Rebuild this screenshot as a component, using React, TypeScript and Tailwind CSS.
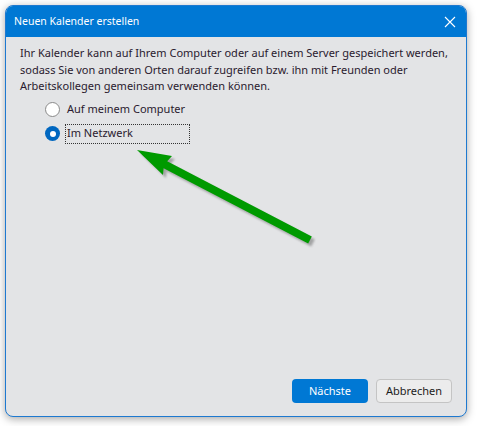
import React from 'react'

const font = { fontFamily: '"Segoe UI", "Noto Sans", "Liberation Sans", sans-serif' }

function Radio({ checked }: { checked?: boolean }) {
  if (checked) {
    return (
      <span className="flex h-[15px] w-[15px] shrink-0 items-center justify-center rounded-full bg-[#0067c0]">
        <span className="h-[6px] w-[6px] rounded-full bg-white" />
      </span>
    )
  }
  return <span className="h-[15px] w-[15px] shrink-0 rounded-full border border-[#8a8a8a] bg-white" />
}

const arrowPts = '7,7 42,13 37.2,18.2 181.8,93.5 178.2,100.5 33.6,25.3 33,32'

function GreenArrow() {
  return (
    <svg className="pointer-events-none absolute left-[124px] top-[137px]" width="200" height="112" viewBox="0 0 200 112">
      <defs>
        <filter id="sh" x="-20%" y="-20%" width="140%" height="140%">
          <feGaussianBlur stdDeviation="1.2" />
        </filter>
      </defs>
      <g transform="translate(3,3)" fill="#555" opacity="0.45" filter="url(#sh)">
        <polygon points={arrowPts} />
      </g>
      <polygon points={arrowPts} fill="#009a00" />
    </svg>
  )
}

export default function App() {
  return (
    <div className="h-[426px] w-[477px] bg-white p-[5px]" style={font}>
      <div className="relative flex h-[412px] w-[462px] flex-col overflow-hidden rounded-[8px] border border-[#1e79d0] bg-[#e3e4e6] shadow-[0_2px_8px_rgba(0,0,0,0.35)]">
        <div className="flex h-[31px] shrink-0 items-center justify-between bg-[#0078d4] pl-[8px] pr-[10px] text-[10.5px] text-white">
          <span>Neuen Kalender erstellen</span>
          <svg width="12" height="12" viewBox="0 0 12 12">
            <path d="M1 1 L11 11 M11 1 L1 11" stroke="white" strokeWidth="1.1" />
          </svg>
        </div>
        <div className="flex flex-1 flex-col px-[14px] pb-[13px] pt-[8px]">
          <p className="whitespace-nowrap text-[11px] leading-[16.5px] text-[#2a1a2e]">
            Ihr Kalender kann auf Ihrem Computer oder auf einem Server gespeichert werden,
            <br />
            sodass Sie von anderen Orten darauf zugreifen bzw. ihn mit Freunden oder
            <br />
            Arbeitskollegen gemeinsam verwenden können.
          </p>
          <div className="mt-[5px] flex flex-col gap-[4px] pl-[25px] text-[11px] text-[#2a1a2e]">
            <label className="flex h-[20px] items-center gap-[6px]">
              <Radio />
              <span className="px-[1px]">Auf meinem Computer</span>
            </label>
            <label className="flex h-[20px] items-center gap-[5px]">
              <Radio checked />
              <span className="flex h-[20px] w-[125px] items-center border border-dotted border-[#333] px-[1px]">
                Im Netzwerk
              </span>
            </label>
          </div>
          <div className="mt-auto flex justify-end gap-[8px] text-[11px]">
            <button className="h-[24px] w-[76px] rounded-[4px] bg-[#0078d4] text-white">Nächste</button>
            <button className="h-[24px] w-[76px] rounded-[4px] border border-[#c4c4c4] bg-[#ececec] text-[#1b1b1b]">
              Abbrechen
            </button>
          </div>
        </div>
        <GreenArrow />
      </div>
    </div>
  )
}
